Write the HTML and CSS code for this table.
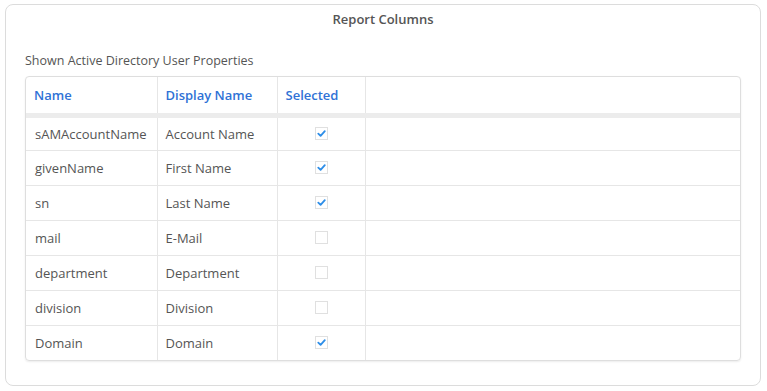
FILE: index.html
```html
<!DOCTYPE html>
<html lang="en">
<head>
  <meta charset="UTF-8">
  <title>Report Columns</title>
  <link rel="stylesheet" href="styles.css">
</head>
<body>
  <div class="panel">
    <h2 class="panel-title">Report Columns</h2>
    <p class="caption">Shown Active Directory User Properties</p>

    <div class="grid-wrap">
      <table class="grid">
        <colgroup>
          <col class="col-name">
          <col class="col-display">
          <col class="col-selected">
          <col>
        </colgroup>
        <thead>
          <tr>
            <th>Name</th>
            <th>Display Name</th>
            <th>Selected</th>
            <th></th>
          </tr>
        </thead>
        <tbody>
          <tr>
            <td>sAMAccountName</td>
            <td>Account Name</td>
            <td class="check-cell"><span class="check on"><svg viewBox="0 0 12 12"><path d="M2.5 6.2 L5 8.6 L9.6 3.4"/></svg></span></td>
            <td></td>
          </tr>
          <tr>
            <td>givenName</td>
            <td>First Name</td>
            <td class="check-cell"><span class="check on"><svg viewBox="0 0 12 12"><path d="M2.5 6.2 L5 8.6 L9.6 3.4"/></svg></span></td>
            <td></td>
          </tr>
          <tr>
            <td>sn</td>
            <td>Last Name</td>
            <td class="check-cell"><span class="check on"><svg viewBox="0 0 12 12"><path d="M2.5 6.2 L5 8.6 L9.6 3.4"/></svg></span></td>
            <td></td>
          </tr>
          <tr>
            <td>mail</td>
            <td>E-Mail</td>
            <td class="check-cell"><span class="check"></span></td>
            <td></td>
          </tr>
          <tr>
            <td>department</td>
            <td>Department</td>
            <td class="check-cell"><span class="check"></span></td>
            <td></td>
          </tr>
          <tr>
            <td>division</td>
            <td>Division</td>
            <td class="check-cell"><span class="check"></span></td>
            <td></td>
          </tr>
          <tr>
            <td>Domain</td>
            <td>Domain</td>
            <td class="check-cell"><span class="check on"><svg viewBox="0 0 12 12"><path d="M2.5 6.2 L5 8.6 L9.6 3.4"/></svg></span></td>
            <td></td>
          </tr>
        </tbody>
      </table>
    </div>
  </div>
</body>
</html>
```

FILE: styles.css
```css
* {
  margin: 0;
  padding: 0;
  box-sizing: border-box;
}

body {
  background-color: #fff;
  font-family: "Open Sans", "Noto Sans", sans-serif;
  color: #555;
}

/* Panel */
.panel {
  margin: 4px 6px 0 5px;
  height: 382px;
  border: 1px solid #dcdcdc;
  border-radius: 8px;
  padding: 4px 19px 0 19px;
}

.panel-title {
  font-size: 13px;
  font-weight: 600;
  line-height: 20px;
  text-align: center;
  color: #555;
}

.caption {
  margin-top: 23px;
  font-size: 12.5px;
  line-height: 18px;
  color: #555;
}

/* Table */
.grid-wrap {
  margin-top: 6px;
  border: 1px solid #dedede;
  border-radius: 4px;
  overflow: hidden;
  box-shadow: 0 1px 2px rgba(0, 0, 0, 0.08);
}

.grid {
  width: 100%;
  border-collapse: collapse;
  table-layout: fixed;
  font-size: 13px;
}

.col-name {
  width: 131px;
}

.col-display {
  width: 120px;
}

.col-selected {
  width: 88px;
}

.grid th,
.grid td {
  text-align: left;
  padding: 0 8px;
  border-right: 1px solid #e6e6e6;
  white-space: nowrap;
}

.grid td:first-child {
  padding-left: 9px;
}

.grid th:last-child,
.grid td:last-child {
  border-right: none;
}

.grid th {
  height: 38px;
  color: #2f72d6;
  font-weight: 600;
  border-bottom: 5px solid #ececec;
}

.grid td {
  height: 35px;
  border-bottom: 1px solid #e6e6e6;
}

.grid tbody tr:last-child td {
  border-bottom: none;
}

.check-cell {
  text-align: center !important;
}

.check {
  display: inline-block;
  width: 13px;
  height: 13px;
  border: 1px solid #e0e0e0;
  vertical-align: middle;
  margin-top: -3px;
}

.check svg {
  display: block;
  width: 11px;
  height: 11px;
}

.check path {
  fill: none;
  stroke: #2e8ee8;
  stroke-width: 2;
  stroke-linecap: round;
  stroke-linejoin: round;
}
```
